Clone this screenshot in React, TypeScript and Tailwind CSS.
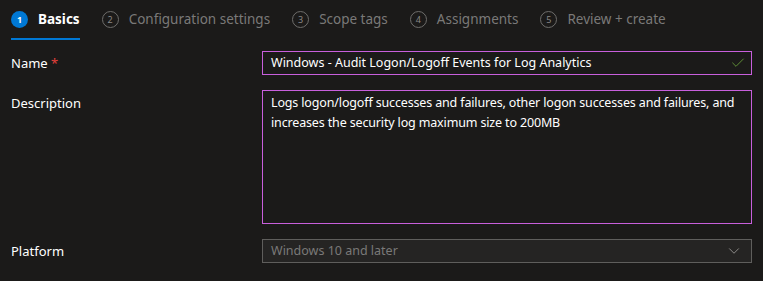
import { Check, ChevronDown } from 'lucide-react';

const steps = [
  { n: 1, label: 'Basics' },
  { n: 2, label: 'Configuration settings' },
  { n: 3, label: 'Scope tags' },
  { n: 4, label: 'Assignments' },
  { n: 5, label: 'Review + create' },
];

export default function App() {
  return (
    <div className="w-[763px] h-[281px] bg-[#1b1a19] px-[11px] font-['Noto_Sans',sans-serif] text-[12.5px] text-[#f3f2f1] overflow-hidden">
      {/* wizard steps */}
      <div className="flex items-start h-[40px] gap-[22px]">
        {steps.map((s, i) => {
          const active = i === 0;
          return (
            <div
              key={s.n}
              className={`flex items-center gap-[10px] h-[40px] pt-[1px] border-b-2 ${active ? 'border-[#0078d4]' : 'border-transparent'}`}
            >
              <span
                className={`w-[17px] h-[17px] rounded-full flex items-center justify-center text-[9px] leading-none ${active ? 'bg-[#0078d4] text-white font-bold' : 'border border-[#6e6d6b] text-[#8a8886]'}`}
              >
                {s.n}
              </span>
              <span className={active ? 'font-bold text-white text-[13.5px]' : 'text-[#7a7978] text-[13.5px]'}>{s.label}</span>
            </div>
          );
        })}
      </div>

      {/* form */}
      <div className="grid grid-cols-[251px_1fr] mt-[11px]">
        <div className="pt-[3px] text-white text-[13px]">
          Name <span className="text-[#e3403b]">*</span>
        </div>
        <div className="h-[24px] border border-[#c85fdc] flex items-center pl-[8px] pr-[5px] justify-between">
          <span className="text-white">Windows - Audit Logon/Logoff Events for Log Analytics</span>
          <Check size={16} strokeWidth={1.25} className="text-[#6ba33b]" />
        </div>

        <div className="pt-[4px] mt-[15px] text-white text-[13px]">Description</div>
        <div className="h-[134px] mt-[15px] border border-[#c85fdc] pl-[8px] pr-[2px] pt-[2px] leading-[20px] tracking-[-0.15px] text-white">
          Logs logon/logoff successes and failures, other logon successes and failures, and increases the security log maximum size to 200MB
        </div>

        <div className="pt-[3px] mt-[15px] text-white text-[13px]">Platform</div>
        <div className="h-[24px] mt-[15px] border border-[#5f5e5c] bg-[#252423] flex items-center pl-[8px] pr-[8px] justify-between">
          <span className="text-[#7a7978]">Windows 10 and later</span>
          <ChevronDown size={18} strokeWidth={1.1} className="text-[#a19f9d]" />
        </div>
      </div>
    </div>
  );
}
